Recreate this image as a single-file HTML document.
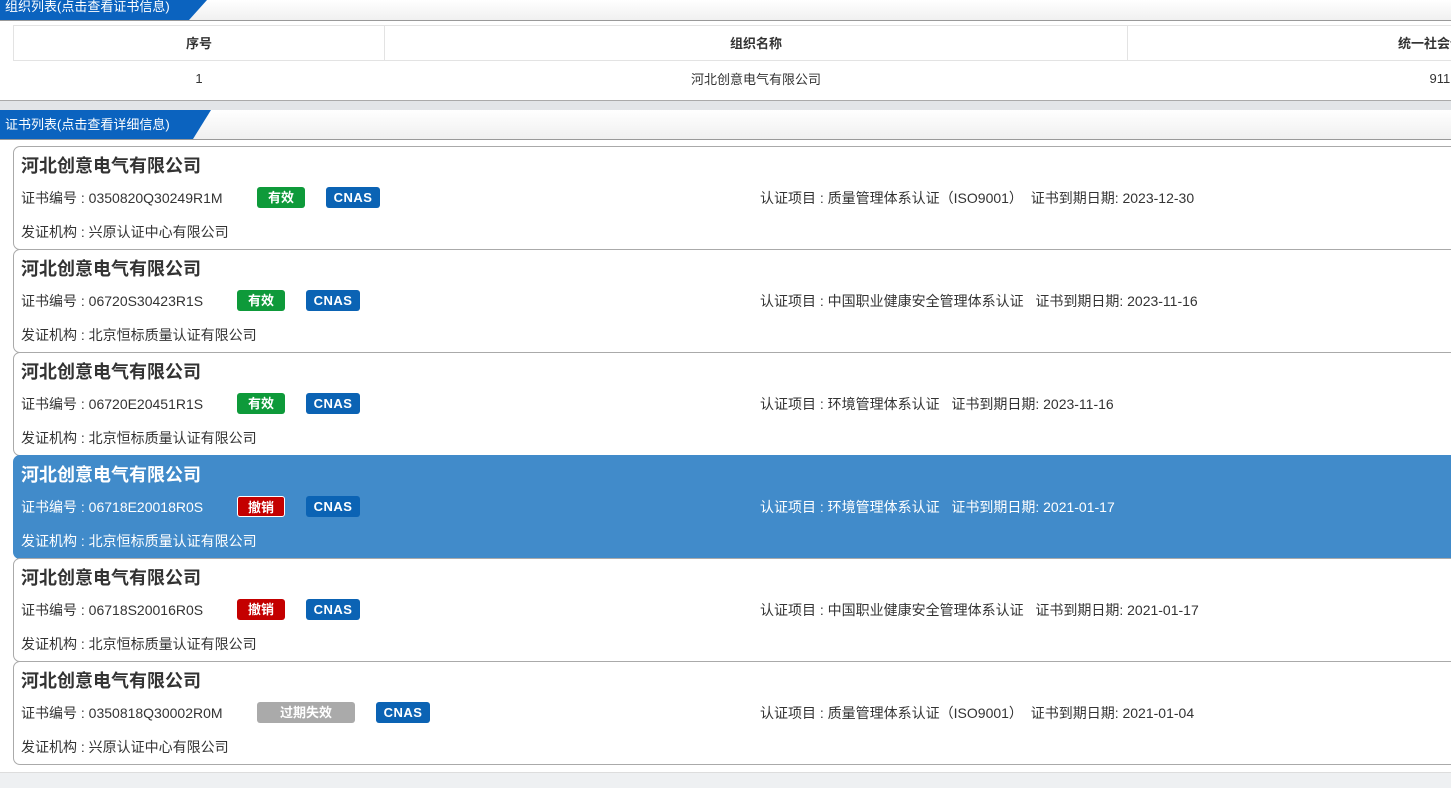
<!DOCTYPE html>
<html><head><meta charset="utf-8"><style>
*{margin:0;padding:0;box-sizing:border-box}
body{width:1451px;height:788px;overflow:hidden;background:#fff;font-family:"Liberation Sans","Noto Sans CJK SC",sans-serif;color:#333;font-size:13px;position:relative}
.bar{position:absolute;left:0;width:1451px;background:linear-gradient(#fff,#f0f0f0);border-bottom:1px solid #999}
.tab{position:absolute;left:0;top:0;height:100%;background:#0b63bf;color:#fff;font-size:13px;padding-left:5px;clip-path:polygon(0 0,100% 0,calc(100% - 18px) 100%,0 100%)}
table{position:absolute;left:13px;top:25px;border-collapse:collapse;width:1460px;table-layout:fixed}
th{height:35px;font-weight:bold;font-size:13px;border:1px solid #e3e3e3;color:#333;background:#fff;padding-bottom:2px;white-space:nowrap;overflow:hidden}
td{height:35px;text-align:center;font-size:13px;white-space:nowrap;overflow:hidden}
.card{position:absolute;left:13px;width:1460px;height:104px;border:1px solid #aaa;border-radius:7px;background:#fff}
.card.sel{background:#418bca;border-color:#418bca;color:#fff}
.t{position:absolute;left:7px;top:5px;font-size:18px;font-weight:bold;color:#333}
.sel .t{color:#fff}
.r{position:absolute;left:7px;top:41px;font-size:14px}
.i{position:absolute;left:7px;top:75px;font-size:14px}
.rt{position:absolute;left:746px;top:41px;font-size:14px}
.b{position:absolute;top:40px;height:21px;line-height:21px;text-align:center;color:#fff;font-weight:bold;font-size:13px;border-radius:3px}
.g{background:#0e9a3a;width:48px}.rd{background:#c40000;width:48px}.gr{background:#aaa;width:98px}
.c{background:#0b63b4;width:54px;letter-spacing:.5px}
.sel .rd{border:1px solid #fff}
</style></head><body>
<div class="bar" style="top:0;height:21px"><div class="tab" style="width:207px;line-height:14px">组织列表(点击查看证书信息)</div></div>
<table><colgroup><col style="width:371px"><col style="width:743px"><col style="width:346px"></colgroup><tr><th>序号</th><th>组织名称</th><th style="text-align:left;padding-left:270px">统一社会信用代码</th></tr>
<tr><td>1</td><td>河北创意电气有限公司</td><td style="text-align:left;padding-left:302px">911</td></tr></table>
<div style="position:absolute;left:0;top:100px;width:1451px;height:10px;background:#e2e5e8;border-top:1px solid #aaa"></div>
<div class="bar" style="top:110px;height:30px"><div class="tab" style="width:211px;line-height:30px">证书列表(点击查看详细信息)</div></div>

<div class="card" style="top:146px"><div class="t">河北创意电气有限公司</div><div class="r">证书编号 : 0350820Q30249R1M</div><div class="b g" style="left:243px">有效</div><div class="b c" style="left:312px">CNAS</div><div class="rt">认证项目 : 质量管理体系认证（ISO9001）&nbsp;&nbsp;证书到期日期: 2023-12-30</div><div class="i">发证机构 : 兴原认证中心有限公司</div></div>
<div class="card" style="top:249px"><div class="t">河北创意电气有限公司</div><div class="r">证书编号 : 06720S30423R1S</div><div class="b g" style="left:223px">有效</div><div class="b c" style="left:292px">CNAS</div><div class="rt">认证项目 : 中国职业健康安全管理体系认证&nbsp;&nbsp;&nbsp;证书到期日期: 2023-11-16</div><div class="i">发证机构 : 北京恒标质量认证有限公司</div></div>
<div class="card" style="top:352px"><div class="t">河北创意电气有限公司</div><div class="r">证书编号 : 06720E20451R1S</div><div class="b g" style="left:223px">有效</div><div class="b c" style="left:292px">CNAS</div><div class="rt">认证项目 : 环境管理体系认证&nbsp;&nbsp;&nbsp;证书到期日期: 2023-11-16</div><div class="i">发证机构 : 北京恒标质量认证有限公司</div></div>
<div class="card sel" style="top:455px"><div class="t">河北创意电气有限公司</div><div class="r">证书编号 : 06718E20018R0S</div><div class="b rd" style="left:223px">撤销</div><div class="b c" style="left:292px">CNAS</div><div class="rt">认证项目 : 环境管理体系认证&nbsp;&nbsp;&nbsp;证书到期日期: 2021-01-17</div><div class="i">发证机构 : 北京恒标质量认证有限公司</div></div>
<div class="card" style="top:558px"><div class="t">河北创意电气有限公司</div><div class="r">证书编号 : 06718S20016R0S</div><div class="b rd" style="left:223px">撤销</div><div class="b c" style="left:292px">CNAS</div><div class="rt">认证项目 : 中国职业健康安全管理体系认证&nbsp;&nbsp;&nbsp;证书到期日期: 2021-01-17</div><div class="i">发证机构 : 北京恒标质量认证有限公司</div></div>
<div class="card" style="top:661px"><div class="t">河北创意电气有限公司</div><div class="r">证书编号 : 0350818Q30002R0M</div><div class="b gr" style="left:243px">过期失效</div><div class="b c" style="left:362px">CNAS</div><div class="rt">认证项目 : 质量管理体系认证（ISO9001）&nbsp;&nbsp;证书到期日期: 2021-01-04</div><div class="i">发证机构 : 兴原认证中心有限公司</div></div>
<div style="position:absolute;left:0;top:772px;width:1451px;height:16px;background:#eef0f2;border-top:1px solid #ddd"></div>
</body></html>
